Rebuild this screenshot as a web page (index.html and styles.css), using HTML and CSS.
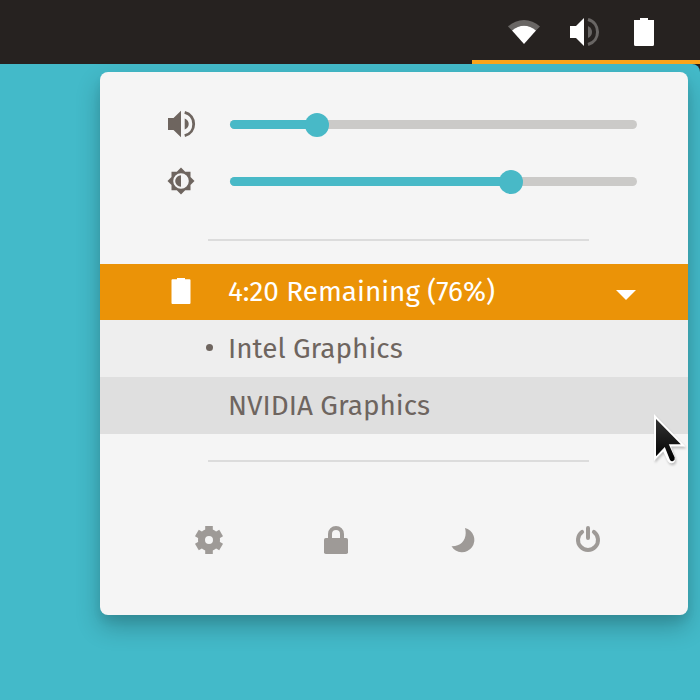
FILE: index.html
```html
<!DOCTYPE html>
<html lang="en">
<head>
<meta charset="utf-8">
<title>System menu</title>
<link rel="stylesheet" href="styles.css">
</head>
<body>
<header class="topbar">
  <div class="indicators">
    <svg class="icon" width="32" height="32" viewBox="0 0 32 32"><path fill="#696664" d="M0 10.500C9 1.800 23 1.800 32 10.500L28 14.500C21 8 11 8 4 14.500Z"/><path fill="#fff" d="M4 14.500C11 8 21 8 28 14.500L16 28Z"/></svg>
    <svg class="icon" width="32" height="32" viewBox="0 0 32 32"><path fill="#fff" d="M2 10h6l8-8v28l-8-8H2z"/><path fill="#696664" d="M20 10q4 2 4 6t-4 6z"/><path fill="none" stroke="#696664" stroke-width="3" d="M20 3.500C32.700 7 32.700 25 20 28.500"/></svg>
    <svg class="icon" width="32" height="32" viewBox="0 0 32 32"><path fill="#fff" d="M12 2h8v2h6v24.500a1.500 1.500 0 0 1-1.500 1.500h-17A1.500 1.500 0 0 1 6 28.500V4h6z"/></svg>
  </div>
</header>
<main class="desktop">
  <section class="menu">
    <div class="slider-row">
      <svg class="icon" width="32" height="32" viewBox="0 0 32 32"><path fill="#6e655f" d="M3 10h5.500L16 2.800v26.400L8.500 22H3zM19.700 10.500q4 1.700 4 5.500t-4 5.500z"/><path fill="none" stroke="#6e655f" stroke-width="2.800" d="M19.700 4.300C31.700 7.300 31.700 24.700 19.700 27.700"/></svg>
      <div class="slider"><div class="fill" style="width:87px"></div><div class="knob"></div></div>
    </div>
    <div class="slider-row">
      <svg class="icon" width="32" height="32" viewBox="0 0 32 32"><path fill="#6e655f" fill-rule="evenodd" d="M16 2.500l4.200 4.200h5.300V12l4 4-4 4v5.300h-5.300L16 29.500l-4.200-4.200H6.500V20l-4-4 4-4V6.700h5.300zM16 8.200a7.800 7.800 0 1 0 0 15.600 7.800 7.800 0 0 0 0-15.600z"/><path fill="#6e655f" d="M16 10.200a5.800 5.800 0 0 0 0 11.600z"/></svg>
      <div class="slider"><div class="fill" style="width:281px"></div><div class="knob"></div></div>
    </div>
    <hr class="rule">
    <div class="item battery">
      <svg class="icon" width="32" height="32" viewBox="0 0 32 32"><path fill="#fff" d="M12 2h8v1.300h4.500q1 0 1 1V27q0 1-1 1H7.500q-1 0-1-1V4.300q0-1 1-1H12z"/></svg>
      <span class="label">4:20 Remaining (76%)</span>
      <svg class="arrow" width="20" height="10" viewBox="0 0 20 10"><path fill="#fff" d="M0 0h20L10 10z"/></svg>
    </div>
    <div class="item option"><i class="dot"></i><span class="label">Intel Graphics</span></div>
    <div class="item option hover"><span class="label">NVIDIA Graphics</span></div>
    <hr class="rule">
    <div class="actions">
      <svg class="icon" width="32" height="32" viewBox="0 0 32 32"><circle cx="16" cy="16" r="7.500" fill="none" stroke="#9e9a97" stroke-width="7"/><g fill="#9e9a97"><path id="tooth" d="M12.200 2h7.600v5.500h-7.600z"/><use href="#tooth" transform="rotate(60 16 16)"/><use href="#tooth" transform="rotate(120 16 16)"/><use href="#tooth" transform="rotate(180 16 16)"/><use href="#tooth" transform="rotate(240 16 16)"/><use href="#tooth" transform="rotate(300 16 16)"/></g></svg>
      <svg class="icon" width="32" height="32" viewBox="0 0 32 32"><rect x="4" y="14" width="24" height="16" rx="1.800" fill="#9e9a97"/><path fill="none" stroke="#9e9a97" stroke-width="4" d="M10 15v-5a6 6 0 0 1 12 0v5"/></svg>
      <svg class="icon" width="32" height="32" viewBox="0 0 32 32"><path fill="#9e9a97" d="M19 4A12.300 12.300 0 1 1 5.500 22.300C15 22.800 22 15 19 4z"/></svg>
      <svg class="icon" width="32" height="32" viewBox="0 0 32 32"><path fill="none" stroke="#9e9a97" stroke-width="4" stroke-linecap="round" d="M16 4v10M10.100 7.900a10 10 0 1 0 11.800 0"/></svg>
    </div>
  </section>
</main>
<svg class="cursor" width="44" height="60" viewBox="0 0 44 60"><defs><linearGradient id="ink" x1="0" y1="0" x2="0" y2="1"><stop offset="0" stop-color="#333"/><stop offset="1" stop-color="#000"/></linearGradient></defs><path fill="#fff" d="M4 4v47l9.300-9.500 4.400 9.500q2 3 5 2t2.500-4.800L21 36.500h14.500z"/><path fill="url(#ink)" d="M6 9v37.300l8.800-9.300 5 12.600q1 2.200 3.200 1.300t1.700-3.300L18.800 34.300h12z"/></svg>
</body>
</html>
```
FILE: styles.css
```css
body {
  margin: 0;
  width: 700px;
  height: 700px;
  overflow: hidden;
  background: #262220;
  font-family: "Fira Sans", "Noto Sans", sans-serif;
}
svg { display: block; flex: none; }
.topbar {
  height: 64px;
  display: flex;
  justify-content: flex-end;
}
.indicators {
  box-sizing: border-box;
  width: 228px;
  height: 64px;
  padding: 0 40px 0 36px;
  border-bottom: 4px solid #faa41a;
  display: flex;
  align-items: center;
  justify-content: space-between;
}
.indicators .icon { margin-top: 4px; }
.desktop {
  box-sizing: border-box;
  height: 636px;
  padding: 8px 12px 0 100px;
  border-top-right-radius: 8px;
  background: #43bac9;
}
.menu {
  box-sizing: border-box;
  height: 543px;
  padding-top: 24px;
  border-radius: 8px;
  background: #f5f5f5;
  box-shadow: 0 12px 24px rgba(0, 0, 0, .24), 0 6px 8px rgba(0, 0, 0, .06);
}
.slider-row {
  height: 57px;
  padding: 0 51px 0 65px;
  display: flex;
  align-items: center;
  gap: 33px;
}
.slider-row .icon { margin-bottom: 1px; }
.slider {
  flex: 1;
  height: 8.600px;
  border-radius: 5px;
  background: #cbcac8;
  display: flex;
  align-items: center;
}
.fill {
  height: 8.600px;
  border-radius: 5px 0 0 5px;
  background: #48b9c7;
}
.knob {
  width: 24px;
  height: 24px;
  margin-left: -12px;
  border-radius: 50%;
  background: #48b9c7;
}
.rule {
  width: 381px;
  height: 2px;
  margin: 29px 0 23px 108px;
  border: 0;
  background: #dcdcdc;
}
.item {
  box-sizing: border-box;
  height: 57px;
  display: flex;
  align-items: center;
  color: #6e655f;
}
.battery {
  height: 56px;
  padding: 0 52px 0 65px;
  background: #eb9307;
  color: #fff;
}
.battery .icon { margin-right: 31px; }
.arrow { margin: 5px 0 0 auto; }
.option {
  padding-left: 128px;
  background: #eee;
}
.hover { background: #dfdfdf; }
.dot {
  width: 7px;
  height: 7px;
  margin: -3px 15px 0 -22px;
  border-radius: 50%;
  background: #6e655f;
}
.label {
  font-size: 27.900px;
  line-height: 36px;
  white-space: nowrap;
}
.item + .rule { margin: 26px 0 62px 108px; }
.actions {
  padding-left: 93px;
  display: grid;
  grid-template-columns: 127px 126px 126px 32px;
}
.cursor {
  position: absolute;
  left: 650px;
  top: 410px;
  filter: drop-shadow(1px 2px 1px rgba(0, 0, 0, .22));
}
```
